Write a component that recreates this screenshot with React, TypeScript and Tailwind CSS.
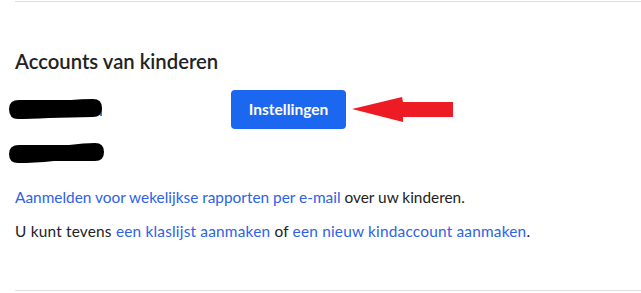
export default function App() {
  return (
    <div className="w-[641px] h-[293px] bg-white overflow-hidden font-['Lato','Liberation_Sans',sans-serif] text-[#222]">
      <div className="mt-px ml-[15px] border-t border-[#dedede] pt-[45px]">
        <h2 className="text-[20.3px] leading-[28px] font-semibold text-[#222]">Accounts van kinderen</h2>

        <div className="mt-[15px] flex items-center h-[39px]">
          <div className="w-[216px] -ml-[6px]">
            <svg width="100" height="22" viewBox="0 0 100 22">
              <rect x="91" y="9" width="2" height="8" fill="#1e88e5" />
              <path d="M10 1 L62 1 Q72 0 84 0 Q93 0 93 9 Q93 18 84 18 L40 19 Q20 20 9 20 Q0 20 0 10 Q0 1 10 1 Z" fill="#000" />
            </svg>
          </div>
          <button className="w-[115px] h-[39px] ml-[6px] rounded-[4px] bg-[#1b67f0] text-white text-[15.5px] font-bold">
            Instellingen
          </button>
          <svg className="ml-[6px]" width="104" height="28" viewBox="0 0 104 28">
            <polygon points="0,13 50,1 51,6 101,6 101,21 51,21 51,26" fill="#ed1c24" />
          </svg>
        </div>

        <div className="mt-[5px] h-[39px] flex items-center">
          <div className="-ml-[6px]">
            <svg width="100" height="22" viewBox="0 0 100 22">
              <path d="M10 2 L60 2 Q75 0 86 0 Q95 0 95 9 Q95 18 86 18 L45 18 Q25 20 9 20 Q0 20 0 11 Q0 2 10 2 Z" fill="#000" />
            </svg>
          </div>
        </div>

        <p className="mt-[12px] text-[15.4px] leading-[24px]">
          <a className="text-[#2e62e8]">Aanmelden voor wekelijkse rapporten per e-mail</a> over uw kinderen.
        </p>
        <p className="mt-[10px] text-[15.4px] leading-[24px] tracking-[0.2px]">
          U kunt tevens <a className="text-[#2e62e8]">een klaslijst aanmaken</a> of{" "}
          <a className="text-[#2e62e8]">een nieuw kindaccount aanmaken</a>.
        </p>

        <div className="mt-[47px] border-t border-[#dedede]" />
      </div>
    </div>
  );
}
